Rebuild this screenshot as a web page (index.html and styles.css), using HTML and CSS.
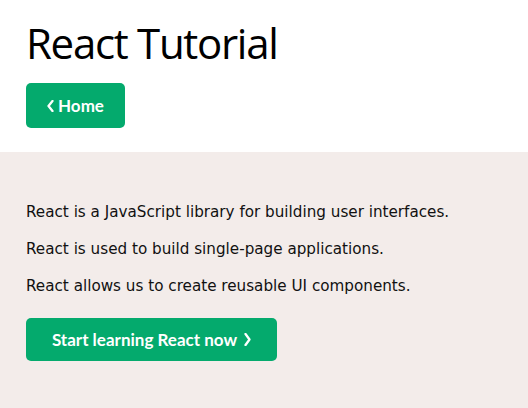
FILE: index.html
```html
<!DOCTYPE html>
<html>
<head>
<meta charset="utf-8">
<link rel="stylesheet" href="styles.css">
</head>
<body>
<header class="top">
  <h1 class="title">React Tutorial</h1>
  <a class="btn btn-home" href="#"><svg class="chev" width="7" height="12" viewBox="0 0 7 12"><path d="M5.5 1 L1.5 6 L5.5 11" fill="none" stroke="#fff" stroke-width="2.3" stroke-linecap="round" stroke-linejoin="round"/></svg>Home</a>
</header>
<section class="intro">
  <p>React is a JavaScript library for building user interfaces.</p>
  <p>React is used to build single-page applications.</p>
  <p>React allows us to create reusable UI components.</p>
  <a class="btn btn-start" href="#">Start learning React now<svg class="chev chev-r" width="7" height="13" viewBox="0 0 7 13"><path d="M1.5 1 L5.5 6.5 L1.5 12" fill="none" stroke="#fff" stroke-width="2.3" stroke-linecap="round" stroke-linejoin="round"/></svg></a>
</section>
</body>
</html>
```
FILE: styles.css
```css
html, body {
  margin: 0;
  padding: 0;
  background: #ffffff;
}
body {
  font-family: "DejaVu Sans", Verdana, sans-serif;
  color: #000;
}
.top {
  padding: 14px 26px 24px;
  display: flex;
  flex-direction: column;
  align-items: flex-start;
}
.title {
  font-family: "Open Sans", sans-serif;
  font-weight: 400;
  font-size: 42px;
  line-height: 58px;
  margin: 0 0 11px;
  letter-spacing: -1.3px;
}
.btn {
  display: inline-flex;
  align-items: center;
  background: #04aa6d;
  color: #fff;
  text-decoration: none;
  font-family: "Lato", sans-serif;
  font-weight: 700;
  font-size: 17px;
  border-radius: 5px;
  box-sizing: border-box;
}
.btn-home {
  width: 99px;
  height: 45px;
  justify-content: center;
  gap: 4px;
}
.intro {
  background: #f3ecea;
  padding: 49px 26px 60px;
  display: flex;
  flex-direction: column;
  align-items: flex-start;
}
.intro p {
  margin: 0 0 15px;
  font-size: 15.2px;
  line-height: 22px;
  color: #111;
}
.btn-start {
  margin-top: 6px;
  width: 251px;
  height: 43px;
  justify-content: center;
  gap: 7px;
}
```
